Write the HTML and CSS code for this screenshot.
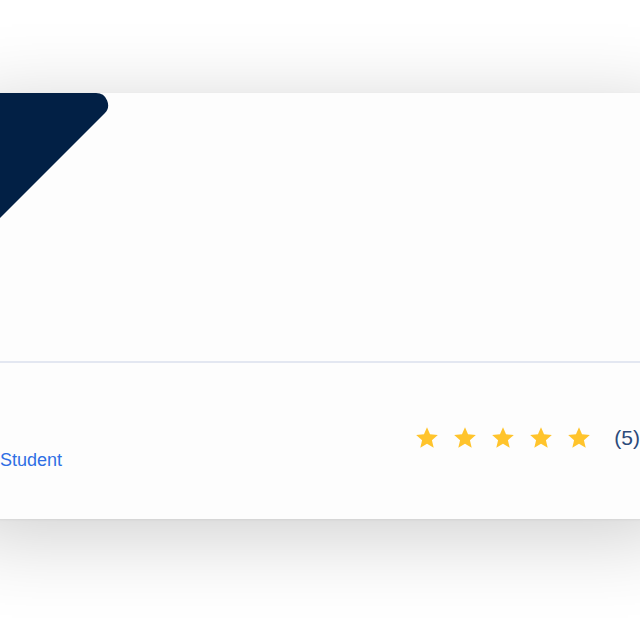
FILE: index.html
```html
<!DOCTYPE html>
<html>
<head>
	<meta charset="utf-8" />
	<link rel="stylesheet" href="styles.css">
</head>
<body>
	<div class="stage">
		<div class="card">
			<div class="card_top">
				<svg class="corner" width="150" height="165" viewBox="0 0 150 165">
					<path d="M0 0 H136 A12 12 0 0 1 144.5 20.5 L0 165 Z" fill="#022045"/>
				</svg>
			</div>
			<div class="card_foot">
				<div class="who">Student</div>
				<div class="rating">
					<div class="stars">
						<svg viewBox="0 0 24 24"><path d="M12 17.27L18.18 21l-1.64-7.03L22 9.24l-7.19-.61L12 2 9.19 8.63 2 9.24l5.46 4.73L5.82 21z"/></svg>
						<svg viewBox="0 0 24 24"><path d="M12 17.27L18.18 21l-1.64-7.03L22 9.24l-7.19-.61L12 2 9.19 8.63 2 9.24l5.46 4.73L5.82 21z"/></svg>
						<svg viewBox="0 0 24 24"><path d="M12 17.27L18.18 21l-1.64-7.03L22 9.24l-7.19-.61L12 2 9.19 8.63 2 9.24l5.46 4.73L5.82 21z"/></svg>
						<svg viewBox="0 0 24 24"><path d="M12 17.27L18.18 21l-1.64-7.03L22 9.24l-7.19-.61L12 2 9.19 8.63 2 9.24l5.46 4.73L5.82 21z"/></svg>
						<svg viewBox="0 0 24 24"><path d="M12 17.27L18.18 21l-1.64-7.03L22 9.24l-7.19-.61L12 2 9.19 8.63 2 9.24l5.46 4.73L5.82 21z"/></svg>
					</div>
					<span class="count">(5)</span>
				</div>
			</div>
		</div>
	</div>
</body>
</html>
```

FILE: styles.css
```css
html, body
{
	margin:0;
	padding:0;
	background:#ffffff;
	font-family:"Liberation Sans", Arial, sans-serif;
}
.stage
{
	width:640px;
	height:640px;
	overflow:hidden;
	padding-top:93px;
	box-sizing:border-box;
}
.card
{
	margin:0 -40px;
	background:#fdfdfd;
	box-shadow:0 15px 80px rgba(0,0,0,0.2), 0 1px 2px rgba(0,0,0,0.06);
}
.card_top
{
	height:268px;
	border-bottom:2px solid #e3e7f1;
}
.corner
{
	display:block;
}
.card_foot
{
	height:156px;
	display:flex;
	justify-content:space-between;
	align-items:center;
	padding:0 40px 0 40px;
}
.who
{
	margin-top:38px;
	font-size:18px;
	color:#2f6fe4;
}
.rating
{
	display:flex;
	align-items:center;
	gap:22px;
	margin-top:-6px;
}
.stars
{
	display:flex;
	gap:12px;
}
.stars svg
{
	width:26px;
	height:26px;
	fill:#ffc42c;
}
.count
{
	font-size:21px;
	color:#2c4a7a;
}
```
